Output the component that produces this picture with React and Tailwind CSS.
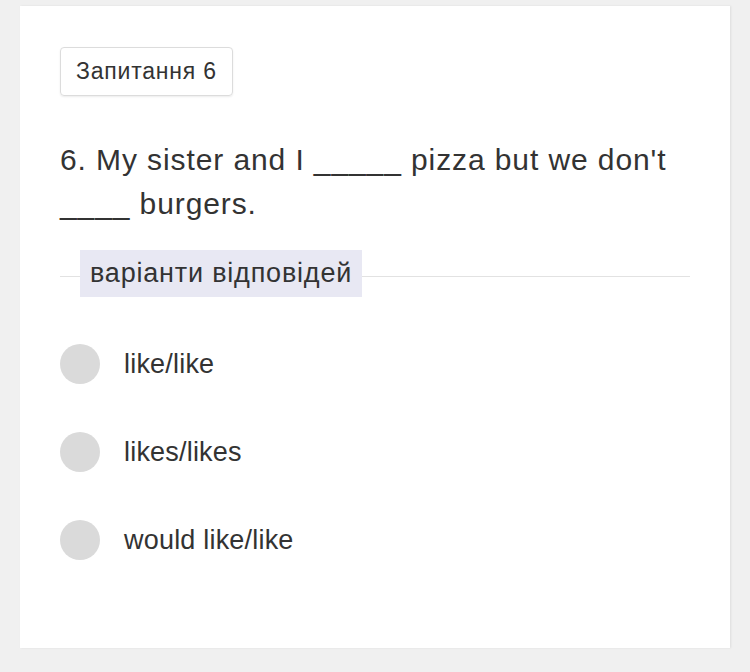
import React from 'react';

const options = ['like/like', 'likes/likes', 'would like/like'];

function App() {
  return (
    <div className="min-h-screen bg-[#f0f0f0] pt-[6px] pl-[20px] pr-[20px]" style={{ fontFamily: '"Liberation Sans", Arial, sans-serif' }}>
      <div className="w-[710px] h-[642px] bg-white shadow-[1px_0_2px_rgba(0,0,0,0.08)] pt-[41px] px-10 text-[#333]">
        <div className="inline-block border border-[#dcdcdc] rounded-[4px] px-[15px] h-[49px] leading-[47px] text-[23px] tracking-[0.8px] shadow-[0_1px_2px_rgba(0,0,0,0.08)]">
          Запитання 6
        </div>

        <p className="mt-[42px] text-[30px] leading-[44px] tracking-[0.9px]">
          6. My sister and I _____ pizza but we don't ____ burgers.
        </p>

        <div className="relative mt-[24px] h-[47px] flex items-center">
          <div className="absolute left-0 right-0 top-[26px] h-px bg-[#e2e2e2]"></div>
          <span className="relative ml-5 bg-[#e8e8f3] px-[10px] h-[47px] leading-[47px] text-[27px] tracking-[0.8px]">
            варіанти відповідей
          </span>
        </div>

        <ul className="mt-[47px] flex flex-col gap-[48px]">
          {options.map((opt) => (
            <li key={opt} className="flex items-center gap-6 h-10">
              <span className="w-10 h-10 rounded-full bg-[#dadada]"></span>
              <span className="text-[27px] tracking-[0.2px]">{opt}</span>
            </li>
          ))}
        </ul>
      </div>
    </div>
  );
}

export default App;
